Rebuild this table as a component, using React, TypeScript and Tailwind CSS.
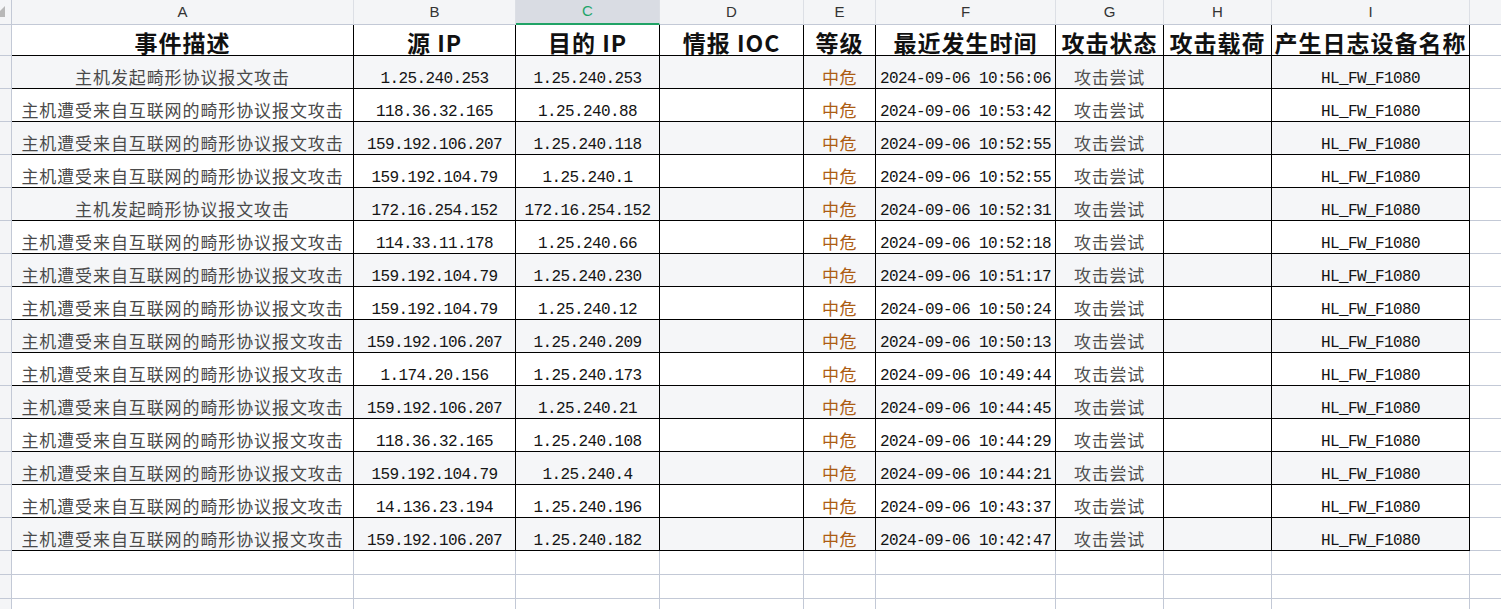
import React from 'react';

const COLS = [
  { key: 'A', w: 'w-[342px]' },
  { key: 'B', w: 'w-[162px]' },
  { key: 'C', w: 'w-[144px]' },
  { key: 'D', w: 'w-[144px]' },
  { key: 'E', w: 'w-[72px]' },
  { key: 'F', w: 'w-[180px]' },
  { key: 'G', w: 'w-[108px]' },
  { key: 'H', w: 'w-[108px]' },
  { key: 'I', w: 'w-[198px]' },
];

const HEADERS = ['事件描述', '源 IP', '目的 IP', '情报 IOC', '等级', '最近发生时间', '攻击状态', '攻击载荷', '产生日志设备名称'];

const SHORT = '主机发起畸形协议报文攻击';
const LONG = '主机遭受来自互联网的畸形协议报文攻击';

const ROWS: [string, string, string, string][] = [
  [SHORT, '1.25.240.253', '1.25.240.253', '10:56:06'],
  [LONG, '118.36.32.165', '1.25.240.88', '10:53:42'],
  [LONG, '159.192.106.207', '1.25.240.118', '10:52:55'],
  [LONG, '159.192.104.79', '1.25.240.1', '10:52:55'],
  [SHORT, '172.16.254.152', '172.16.254.152', '10:52:31'],
  [LONG, '114.33.11.178', '1.25.240.66', '10:52:18'],
  [LONG, '159.192.104.79', '1.25.240.230', '10:51:17'],
  [LONG, '159.192.104.79', '1.25.240.12', '10:50:24'],
  [LONG, '159.192.106.207', '1.25.240.209', '10:50:13'],
  [LONG, '1.174.20.156', '1.25.240.173', '10:49:44'],
  [LONG, '159.192.106.207', '1.25.240.21', '10:44:45'],
  [LONG, '118.36.32.165', '1.25.240.108', '10:44:29'],
  [LONG, '159.192.104.79', '1.25.240.4', '10:44:21'],
  [LONG, '14.136.23.194', '1.25.240.196', '10:43:37'],
  [LONG, '159.192.106.207', '1.25.240.182', '10:42:47'],
];

const cjk = "font-['Noto_Sans_CJK_SC',sans-serif]";
const mono = "font-['Liberation_Mono','Noto_Sans_CJK_SC',monospace] text-[16px] tracking-[-0.6px] text-[#141414] leading-none pb-[1px]";

function RowHead() {
  return <div className="w-[12px] shrink-0 h-full bg-[#f4f5f7] border-r border-b border-[#c3c9d6]" />;
}

function Cell({ w, children, className = '' }: { w: string; children?: React.ReactNode; className?: string }) {
  return (
    <div className={`${w} shrink-0 h-full flex items-end justify-center border-r border-b border-black whitespace-nowrap ${className}`}>
      {children}
    </div>
  );
}

export default function App() {
  return (
    <div className="w-[1501px] h-[609px] bg-white overflow-hidden select-none">
      {/* column letters */}
      <div className="flex h-[25px]">
        <div className="w-[12px] shrink-0 h-full bg-[#f4f5f7] border-r border-b border-[#c3c9d6] relative">
          <svg width="6" height="18" className="absolute left-0 top-0">
            <polygon points="5,6 5,17 0,17 0,11" fill="#b8b8b8" />
          </svg>
        </div>
        {COLS.map((c) => (
          <div
            key={c.key}
            className={`${c.w} shrink-0 h-full flex items-center justify-center font-['Liberation_Sans',sans-serif] text-[15px] border-r border-[#dcdfe5] ${
              c.key === 'C'
                ? 'bg-[#d9dce3] text-[#1fa56a] border-b-2 border-b-[#21a366]'
                : 'bg-[#f4f5f7] text-[#333] border-b border-b-[#c3c9d6]'
            }`}
          >
            {c.key}
          </div>
        ))}
        <div className="flex-1 h-full bg-[#f4f5f7] border-b border-[#c3c9d6]" />
      </div>

      {/* header row */}
      <div className="flex h-[31px]">
        <RowHead />
        {COLS.map((c, i) => (
          <Cell key={c.key} w={c.w} className="pb-[1px]">
            <span className={`${cjk} font-bold text-[23px] leading-none tracking-[1px] text-[#111]`}>{HEADERS[i]}</span>
          </Cell>
        ))}
        <div className="flex-1 h-full border-b border-[#c3c9d6]" />
      </div>

      {/* data rows */}
      {ROWS.map((r, idx) => {
        const stripe = idx % 2 === 0 ? 'bg-[#f5f6f8]' : 'bg-white';
        return (
          <div key={idx} className="flex h-[33px]">
            <RowHead />
            <Cell w={COLS[0].w} className={`${stripe} pb-[3px]`}>
              <span className={`${cjk} text-[17px] leading-none tracking-[0.9px] text-[#4a4a4a]`}>{r[0]}</span>
            </Cell>
            <Cell w={COLS[1].w} className={stripe}>
              <span className={mono}>{r[1]}</span>
            </Cell>
            <Cell w={COLS[2].w} className={stripe}>
              <span className={mono}>{r[2]}</span>
            </Cell>
            <Cell w={COLS[3].w} className={stripe} />
            <Cell w={COLS[4].w} className={`${stripe} pb-[3px]`}>
              <span className={`${cjk} text-[17px] leading-none tracking-[0.5px] text-[#ad5d14]`}>中危</span>
            </Cell>
            <Cell w={COLS[5].w} className={stripe}>
              <span className={mono}>2024-09-06 {r[3]}</span>
            </Cell>
            <Cell w={COLS[6].w} className={`${stripe} pb-[3px]`}>
              <span className={`${cjk} text-[17px] leading-none tracking-[0.8px] text-[#505050]`}>攻击尝试</span>
            </Cell>
            <Cell w={COLS[7].w} className={stripe} />
            <Cell w={COLS[8].w} className={stripe}>
              <span className={mono}>HL_FW_F1080</span>
            </Cell>
            <div className="flex-1 h-full border-b border-[#c3c9d6]" />
          </div>
        );
      })}

      {/* empty rows */}
      {[0, 1, 2].map((e) => (
        <div key={e} className="flex h-[24px]">
          <RowHead />
          {COLS.map((c) => (
            <div key={c.key} className={`${c.w} shrink-0 h-full border-r border-b border-[#c3c9d6]`} />
          ))}
          <div className="flex-1 h-full border-b border-[#c3c9d6]" />
        </div>
      ))}
    </div>
  );
}
